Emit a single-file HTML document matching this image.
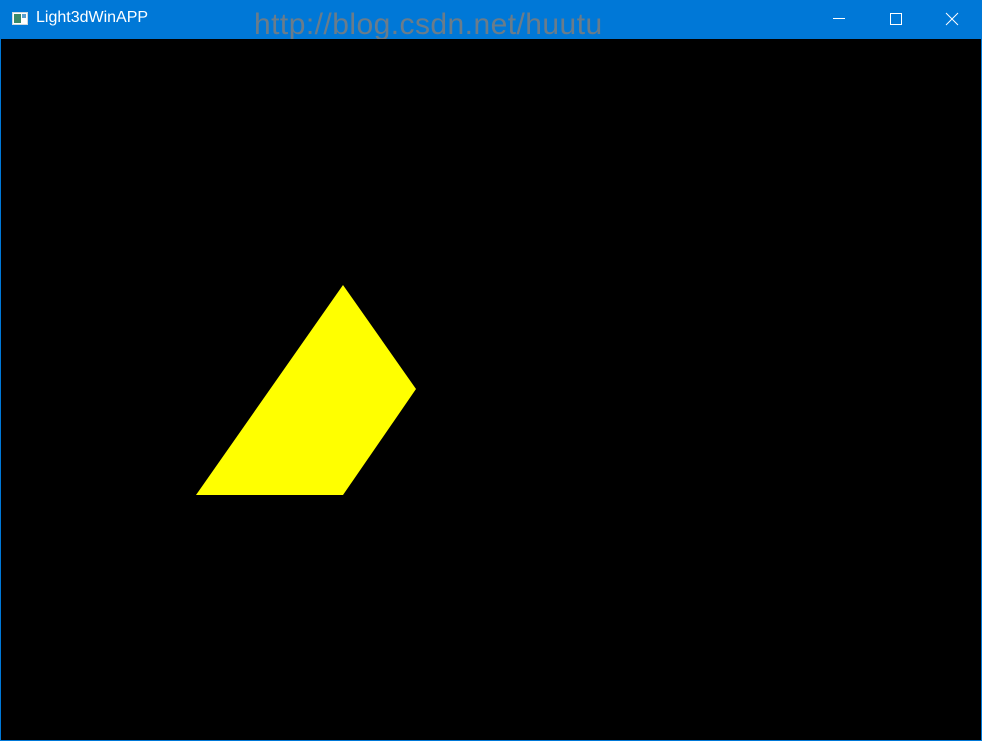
<!DOCTYPE html>
<html><head><meta charset="utf-8"><style>
html,body{margin:0;padding:0;width:982px;height:741px;overflow:hidden;background:#0078d7;}
.title{position:absolute;left:0;top:0;width:982px;height:39px;background:#0078d7;}
.t{position:absolute;left:36px;top:9px;color:#fff;font:16px "Liberation Sans",sans-serif;}
.wm{position:absolute;left:254px;top:8px;color:#7d7d7d;font:30px "Liberation Sans",sans-serif;letter-spacing:0.45px;opacity:.85;}
.canvas{position:absolute;left:1px;top:39px;width:980px;height:701px;background:#000;}
</style></head><body>
<div class="title">
<svg style="position:absolute;left:12px;top:12px" width="16" height="14"><rect x="0.5" y="0.5" width="15" height="12" fill="#fff" stroke="#cfd8dc"/><rect x="2" y="2" width="7" height="9" fill="#3a8a6a"/><rect x="10" y="2" width="4" height="4" fill="#5aa0d0"/></svg>
<div class="t">Light3dWinAPP</div>
<div class="wm">http://blog.csdn.net/huutu</div>
<svg style="position:absolute;left:833px;top:12px" width="130" height="14" stroke="#fff" stroke-width="1" fill="none">
<line x1="0" y1="6.5" x2="12" y2="6.5"/>
<rect x="57.5" y="1.5" width="11" height="11"/>
<line x1="113" y1="1" x2="125" y2="13"/><line x1="125" y1="1" x2="113" y2="13"/>
</svg>
</div>
<div class="canvas">
<svg width="980" height="701" style="position:absolute;left:0;top:0"><polygon points="342,246 415,350 342,456 195,456" fill="#ffff00"/></svg>
</div>
</body></html>
